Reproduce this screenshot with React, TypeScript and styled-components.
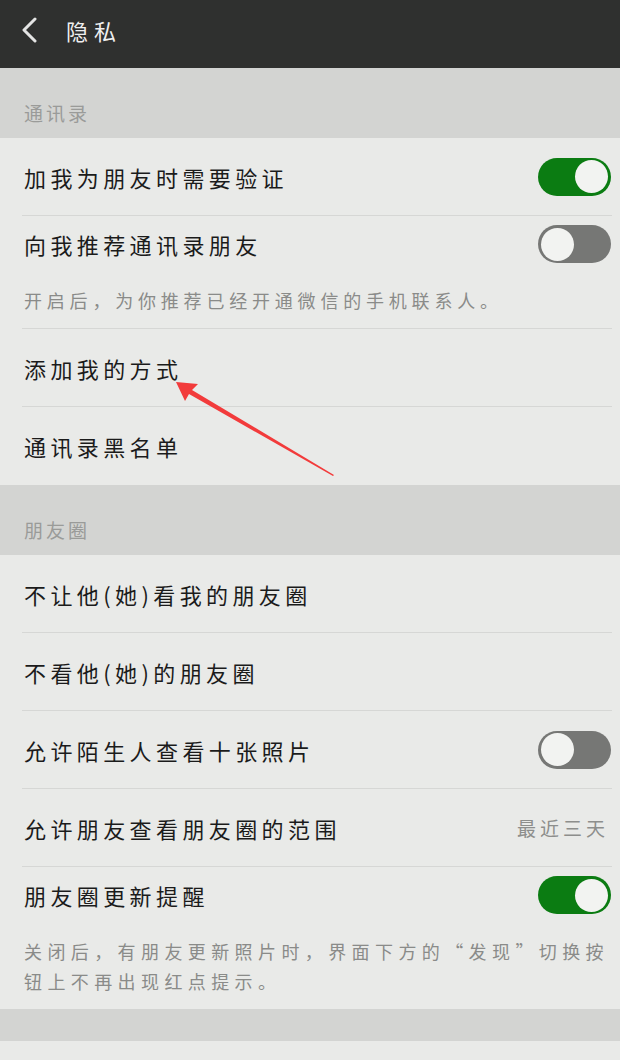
import React from "react"
import styled, { createGlobalStyle } from "styled-components"

const GlobalStyle = createGlobalStyle`
    html, body {
        margin: 0;
        padding: 0;
        background: #e9eae8;
    }
    body {
        font-family: "Noto Sans CJK SC", "Noto Sans", sans-serif;
    }
`

const Page = styled.div`
    width: 620px;
    min-height: 1060px;
    background: #e9eae8;
    position: relative;
    overflow: hidden;
`

const TopBar = styled.header`
    height: 68px;
    background: #2f302f;
    display: flex;
    align-items: center;
    padding: 0 0 8px 20px;
    box-sizing: border-box;
    gap: 26px;
`

const BackIcon = styled.svg`
    width: 20px;
    height: 26px;
`

const Title = styled.h1`
    margin: 0;
    font-size: 22px;
    font-weight: 400;
    color: #efefef;
    letter-spacing: 6px;
`

const SectionHead = styled.div`
    height: 70px;
    background: #d3d4d2;
    display: flex;
    align-items: flex-end;
    padding: 0 24px 12px;
    box-sizing: border-box;
    font-size: 19px;
    letter-spacing: 3px;
    color: #9a9b99;
`

const Group = styled.section`
    background: #e9eae8;
`

const Row = styled.div<{ $short?: boolean; $last?: boolean }>`
    height: ${p => (p.$short ? 56 : 78)}px;
    margin: 0 8px 0 22px;
    padding: 0 1px 0 2px;
    display: flex;
    align-items: center;
    justify-content: space-between;
    border-bottom: ${p => (p.$last ? "none" : "1px solid #d6d7d5")};
    box-sizing: border-box;
`

const Label = styled.span`
    font-size: 22px;
    letter-spacing: 4.4px;
    color: #1b1b1b;
`

const Value = styled.span`
    font-size: 19px;
    letter-spacing: 4px;
    color: #8d8e8c;
    margin-right: 2px;
`

const Note = styled.p<{ $spacing: number; $last?: boolean }>`
    margin: 0 8px 0 22px;
    padding: 13px 0 13px 2px;
    font-size: 18px;
    line-height: 30px;
    letter-spacing: ${p => p.$spacing}px;
    color: #8a8b89;
    border-bottom: ${p => (p.$last ? "none" : "1px solid #d6d7d5")};
`

const Track = styled.div<{ $on: boolean }>`
    width: 73px;
    height: 38px;
    border-radius: 19px;
    background: ${p => (p.$on ? "#0b7c12" : "#767775")};
    display: flex;
    align-items: center;
    justify-content: ${p => (p.$on ? "flex-end" : "flex-start")};
    padding: 0 3px;
    box-sizing: border-box;
`

const Knob = styled.div`
    width: 33px;
    height: 33px;
    border-radius: 50%;
    background: #f2f3f1;
`

const Band = styled.div`
    height: 32px;
    background: #d3d4d2;
`

const Arrow = styled.svg`
    position: absolute;
    left: 0;
    top: 0;
    pointer-events: none;
`

const Toggle = ({ on }: { on: boolean }) => (
    <Track $on={on}>
        <Knob />
    </Track>
)

const App = () => {
    return (
        <Page>
            <GlobalStyle />
            <TopBar>
                <BackIcon viewBox="0 0 20 26">
                    <path d="M15 2 L4 13 L15 24" fill="none" stroke="#e4e4e4" strokeWidth="3" strokeLinecap="round" strokeLinejoin="round" />
                </BackIcon>
                <Title>隐私</Title>
            </TopBar>

            <SectionHead>通讯录</SectionHead>
            <Group>
                <Row>
                    <Label>加我为朋友时需要验证</Label>
                    <Toggle on />
                </Row>
                <Row $short $last>
                    <Label>向我推荐通讯录朋友</Label>
                    <Toggle on={false} />
                </Row>
                <Note $spacing={4.8}>开启后，为你推荐已经开通微信的手机联系人。</Note>
                <Row>
                    <Label>添加我的方式</Label>
                </Row>
                <Row $last>
                    <Label>通讯录黑名单</Label>
                </Row>
            </Group>

            <SectionHead>朋友圈</SectionHead>
            <Group>
                <Row>
                    <Label>不让他(她)看我的朋友圈</Label>
                </Row>
                <Row>
                    <Label>不看他(她)的朋友圈</Label>
                </Row>
                <Row>
                    <Label>允许陌生人查看十张照片</Label>
                    <Toggle on={false} />
                </Row>
                <Row>
                    <Label>允许朋友查看朋友圈的范围</Label>
                    <Value>最近三天</Value>
                </Row>
                <Row $short $last>
                    <Label>朋友圈更新提醒</Label>
                    <Toggle on />
                </Row>
                <Note $spacing={5.4} $last>关闭后，有朋友更新照片时，界面下方的“发现”切换按钮上不再出现红点提示。</Note>
            </Group>
            <Band />

            <Arrow width="620" height="1060" viewBox="0 0 620 1060">
                <polygon points="176,382 198,384 192,390 334,475 333,476 189,394 185,401" fill="#f23b3b" />
            </Arrow>
        </Page>
    )
}

export default App
